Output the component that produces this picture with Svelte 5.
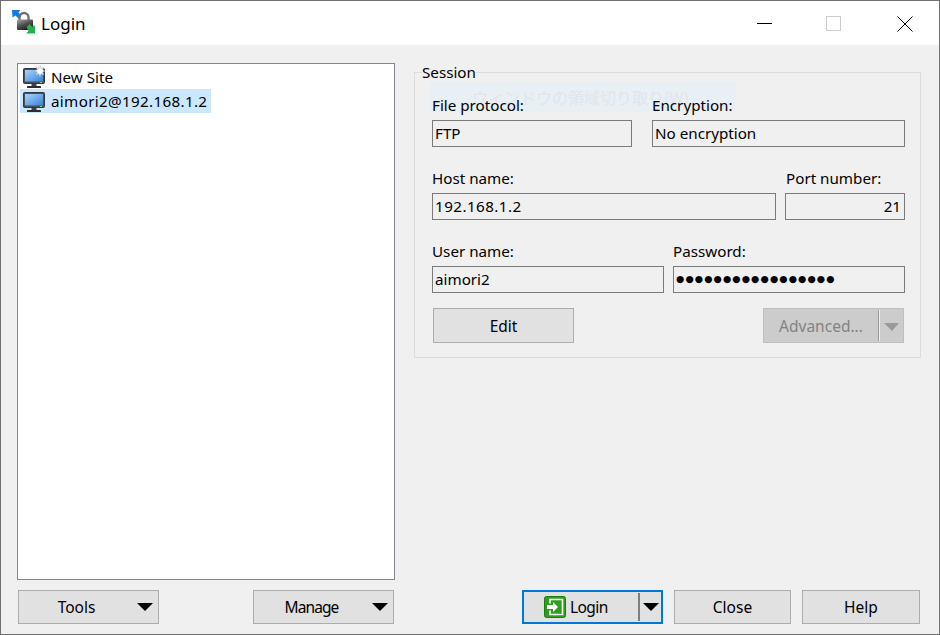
<script>
    const sites = [
        { name: "New Site", isNew: true, selected: false },
        { name: "aimori2@192.168.1.2", isNew: false, selected: true },
    ];
</script>

{#snippet monitor(isNew)}
    <svg class="site-icon" width="22" height="24" viewBox="0 0 22 24">
        <defs>
            <linearGradient id={isNew ? "scrA" : "scrB"} x1="0" y1="0" x2="1" y2="1">
                <stop offset="0" stop-color="#a9d3f8" />
                <stop offset="0.55" stop-color="#6aa8ea" />
                <stop offset="1" stop-color="#3c7fd4" />
            </linearGradient>
        </defs>
        <rect x="0.5" y="3.5" width="21" height="15" rx="1" fill="#4a4f55" stroke="#33373c" />
        <rect x="2" y="5" width="18" height="11.5" fill="url(#{isNew ? 'scrA' : 'scrB'})" />
        <rect x="17" y="17" width="2" height="1" fill="#6ee06e" />
        <rect x="8.5" y="19" width="5" height="2" fill="#3d4248" />
        <rect x="4" y="21" width="14" height="2" rx="0.5" fill="#2a2d31" />
        {#if isNew}
            <path
                d="M17 .5L18.070 3.410 20.900 2.100 19.590 4.930 22 6 19.590 7.070 20.900 9.900 18.070 8.590 17 11.500 15.930 8.590 13.100 9.900 14.410 7.070 11.500 6 14.410 4.930 13.100 2.100 15.930 3.410z"
                fill="#fff"
                stroke="#aab2bc"
                stroke-width="0.5"
            />
        {/if}
    </svg>
{/snippet}

{#snippet arrow()}
    <svg class="arrow" width="16" height="8" viewBox="0 0 16 8"><path d="M0 0h16L8 8z" fill="#000" /></svg>
{/snippet}

<div class="window">
    <header class="titlebar">
        <svg class="app-icon" width="24" height="24" viewBox="0 0 24 24">
            <defs>
                <linearGradient id="lockBody" x1="0" y1="0" x2="0.6" y2="1">
                    <stop offset="0" stop-color="#a8a8a8" />
                    <stop offset="0.5" stop-color="#555" />
                    <stop offset="1" stop-color="#1e1e1e" />
                </linearGradient>
            </defs>
            <path d="M0 0h8.500l-2 2.500 3 3-3 3-3-3-3 2z" fill="#1478e6" />
            <path d="M7.500 10.500V7.500a4.500 4.500 0 0 1 9 0v3" fill="none" stroke="#6f6f6f" stroke-width="2.400" />
            <rect x="5" y="9.500" width="16" height="10.500" rx="1" fill="url(#lockBody)" />
            <path d="M14.500 17l3-3 3 3 2.500-2v8.500h-9l2.500-2.500z" fill="#22b14c" />
        </svg>
        <span class="title">Login</span>
        <div class="controls">
            <svg width="16" height="16" viewBox="0 0 16 16"><path d="M0 7.500h15" stroke="#000" /></svg>
            <svg class="max" width="16" height="16" viewBox="0 0 16 16"><rect x="0.500" y="0.500" width="14" height="14" fill="none" stroke="#ccc" /></svg>
            <svg width="16" height="16" viewBox="0 0 16 16"><path d="M0.500 0.500l15 15M15.500 0.500l-15 15" stroke="#000" fill="none" /></svg>
        </div>
    </header>

    <main class="content">
        <section class="left">
            <ul class="site-list">
                {#each sites as site}
                    <li class="site" class:selected={site.selected}>
                        {@render monitor(site.isNew)}
                        <span class:digits={!site.isNew}>{site.name}</span>
                    </li>
                {/each}
            </ul>
            <div class="left-buttons">
                <button class="btn menu-btn"><span class="menu-label">Tools</span>{@render arrow()}</button>
                <button class="btn menu-btn"><span class="menu-label manage">Manage</span>{@render arrow()}</button>
            </div>
        </section>

        <section class="right">
            <fieldset class="session">
                <legend>Session</legend>
                <div class="ghost"><span>ウィンドウの領域切り取り(W)</span></div>
                <div class="row">
                    <div class="field protocol">
                        <div class="label">File protocol:</div>
                        <div class="input">FTP</div>
                    </div>
                    <div class="field grow">
                        <div class="label">Encryption:</div>
                        <div class="input">No encryption</div>
                    </div>
                </div>
                <div class="row host-row">
                    <div class="field grow">
                        <div class="label">Host name:</div>
                        <div class="input host">192.168.1.2</div>
                    </div>
                    <div class="field port">
                        <div class="label port-label">Port number:</div>
                        <div class="input num">21</div>
                    </div>
                </div>
                <div class="row cred-row">
                    <div class="field half">
                        <div class="label">User name:</div>
                        <div class="input">aimori2</div>
                    </div>
                    <div class="field half">
                        <div class="label">Password:</div>
                        <div class="input dots">●●●●●●●●●●●●●●●●●</div>
                    </div>
                </div>
                <div class="session-buttons">
                    <button class="btn wide">Edit</button>
                    <button class="btn wide advanced" disabled>
                        <span class="adv-label">Advanced...</span>
                        <span class="adv-sep"></span>
                        <span class="adv-arrow"></span>
                    </button>
                </div>
            </fieldset>

            <div class="actions">
                <button class="btn login">
                    <span class="login-main">
                        <svg width="22" height="22" viewBox="0 0 22 22">
                            <rect x="0.500" y="0.500" width="21" height="21" rx="2" fill="#2f9e1f" stroke="#1f7a14" />
                            <path d="M6 7.500V3.500h12.500v15H6v-4" fill="none" stroke="#fff" stroke-width="1.600" />
                            <path d="M3 9h6V6l5 5-5 5v-3H3z" fill="#fff" />
                        </svg>
                        <span class="tight">Login</span>
                    </span>
                    <span class="login-sep"></span>
                    <span class="login-arrow">{@render arrow()}</span>
                </button>
                <button class="btn close">Close</button>
                <button class="btn help">Help</button>
            </div>
        </section>
    </main>
</div>

<style>
    :global(body) {
        margin: 0;
        background: #f0f0f0;
    }

    .window {
        box-sizing: border-box;
        width: 940px;
        height: 635px;
        border: 1px solid #707070;
        display: flex;
        flex-direction: column;
        font-family: "Noto Sans", "Open Sans", sans-serif;
        font-size: 15.2px;
        color: #000;
        background: #f0f0f0;
    }

    .titlebar {
        height: 44px;
        flex: none;
        background: #fff;
        display: flex;
        align-items: center;
        padding-left: 11px;
    }
    .app-icon {
        margin-top: -2px;
    }
    .title {
        margin-left: 5px;
        font-size: 17px;
    }
    .controls {
        margin-left: auto;
        display: flex;
        gap: 54px;
        margin-right: 26px;
        margin-top: 1px;
    }
    .controls .max {
        margin: 0 1px 0 -1px;
    }

    .content {
        flex: 1;
        min-height: 0;
        display: flex;
        padding: 17px 18px 10px 16px;
    }

    .left {
        width: 378px;
        flex: none;
        display: flex;
        flex-direction: column;
        gap: 10px;
        margin-top: 1px;
    }
    .site-list {
        flex: 1;
        margin: 0;
        padding: 1px 2px;
        list-style: none;
        background: #fff;
        border: 1px solid #828790;
    }
    .site {
        width: fit-content;
        height: 24px;
        display: flex;
        align-items: center;
        gap: 6px;
        padding: 0 4px 0 3px;
    }
    .site.selected {
        background: #cce8ff;
    }
    .digits {
        letter-spacing: 0.33px;
    }
    .left-buttons {
        display: flex;
        justify-content: space-between;
        padding: 0 1px;
    }

    .btn {
        box-sizing: border-box;
        height: 34px;
        border: 1px solid #adadad;
        background: #e1e1e1;
        font: inherit;
        font-size: 15.5px;
        color: #000;
        padding: 0;
    }
    .tight {
        letter-spacing: -0.6px;
    }
    .manage {
        letter-spacing: -0.9px;
    }
    .menu-btn {
        width: 141px;
        display: flex;
        align-items: center;
        padding-right: 5px;
    }
    .menu-label {
        flex: 1;
        text-align: center;
        padding-right: 3px;
    }
    .arrow {
        display: block;
    }

    .right {
        flex: 1;
        margin-left: 19px;
        display: flex;
        flex-direction: column;
    }
    .session {
        position: relative;
        margin: 0;
        padding: 13px 15px 14px 17px;
        border: 1px solid #dcdcdc;
        min-width: 0;
    }
    legend {
        padding: 0;
        margin-left: -10px;
        line-height: 20px;
        height: 20px;
        position: relative;
        z-index: 1;
    }
    .ghost {
        position: absolute;
        left: 15px;
        top: 0;
        width: 306px;
        height: 30px;
        background: #e8eff5;
        color: #e1e6ea;
        font-family: "Noto Sans CJK JP", sans-serif;
        font-size: 16px;
        line-height: 30px;
        white-space: nowrap;
        overflow: hidden;
    }
    .ghost span {
        margin-left: 42px;
    }

    .row {
        position: relative;
        display: flex;
        gap: 20px;
        margin-bottom: 21px;
    }
    .host-row {
        gap: 9px;
    }
    .cred-row {
        gap: 9px;
        margin-bottom: 15px;
    }
    .field {
        min-width: 0;
    }
    .grow {
        flex: 1;
    }
    .protocol {
        width: 200px;
    }
    .port {
        width: 120px;
    }
    .half {
        flex: 1;
    }
    .label {
        height: 20px;
        line-height: 20px;
        margin-bottom: 5px;
    }
    .port-label {
        padding-left: 1px;
    }
    .input {
        box-sizing: border-box;
        height: 27px;
        line-height: 24px;
        border: 1px solid #7a7a7a;
        background: #f0f0f0;
        padding: 0 2px;
        white-space: nowrap;
    }
    .host {
        letter-spacing: 0.45px;
    }
    .num {
        text-align: right;
        padding-right: 3px;
    }
    .dots {
        font-family: "DejaVu Sans", sans-serif;
        font-size: 9.5px;
        letter-spacing: 1.1px;
    }

    .session-buttons {
        position: relative;
        display: flex;
        justify-content: space-between;
        padding: 0 1px;
    }
    .wide {
        width: 141px;
        height: 35px;
    }
    .advanced {
        display: flex;
        align-items: center;
        background: #cccccc;
        border-color: #bfbfbf;
        color: #838383;
    }
    .adv-label {
        flex: 1;
        text-align: center;
    }
    .adv-sep {
        width: 1px;
        height: 31px;
        background: #f0f0f0;
        border-left: 1px solid #9a9a9a;
    }
    .adv-arrow {
        width: 0;
        height: 0;
        margin: 2px 4px 0 4px;
        border-left: 8px solid transparent;
        border-right: 7px solid transparent;
        border-top: 8px solid #9a9a9a;
    }

    .actions {
        margin-top: auto;
        display: flex;
        justify-content: flex-end;
        gap: 11px;
        padding-right: 1px;
    }
    .login {
        width: 141px;
        border: 2px solid #0078d7;
        display: flex;
        align-items: center;
    }
    .login-main {
        flex: 1;
        display: flex;
        align-items: center;
        gap: 4px;
        padding-left: 20px;
    }
    .login-sep {
        width: 2px;
        height: 28px;
        background: #7f7f7f;
    }
    .login-arrow {
        padding: 0 2px 0 3px;
    }
    .close {
        width: 117px;
    }
    .help {
        width: 118px;
    }
</style>
